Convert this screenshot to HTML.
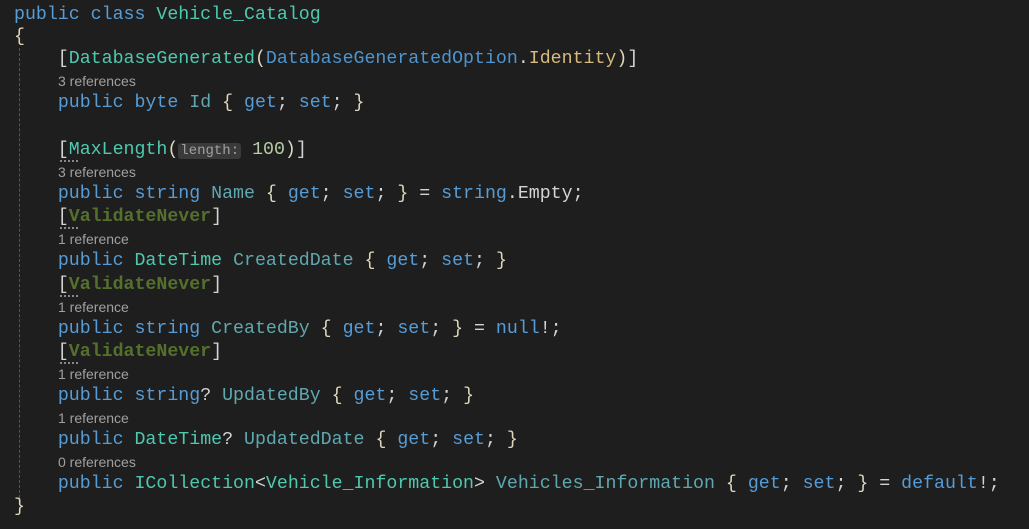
<!DOCTYPE html>
<html><head><meta charset="utf-8"><style>
html,body{margin:0;padding:0;background:#1e1e1e;width:1029px;height:529px;overflow:hidden;position:relative}
.l{position:absolute;left:14px;font-family:"Liberation Mono",monospace;font-size:18.25px;line-height:22px;color:#d4d4d4;white-space:pre}
.c{position:absolute;left:58px;font-family:"Liberation Sans",sans-serif;font-size:14px;line-height:16px;color:#a0a0a0;white-space:pre}
.k{color:#569cd6}.t{color:#4ec9b0}.p{color:#5fa8b0}.b{color:#ddd7bd}.n{color:#b5cea8}.o{color:#d7ba7d}.e{color:#4e94ce}
.v{color:#55702d;font-weight:bold}
.hint{background:#3a3a3a;color:#a0a0a0;font-size:14px;border-radius:3px;padding:0 2px}
.guide{position:absolute;left:19px;top:48px;height:450px;border-left:1px dashed #555}
.dots{position:absolute;left:60px;width:18px;border-top:2px dotted #888}
</style></head><body>
<div class="guide"></div>
<div class="l" style="top:4px"><span class="k">public class</span> <span class="t">Vehicle_Catalog</span></div>
<div class="l b" style="top:26px">{</div>
<div class="l" style="top:48px">    [<span class="t">DatabaseGenerated</span><span class="b">(</span><span class="e">DatabaseGeneratedOption</span>.<span class="o">Identity</span><span class="b">)</span>]</div>
<div class="c" style="top:73px">3 references</div>
<div class="l" style="top:92px">    <span class="k">public byte</span> <span class="p">Id</span> <span class="b">{</span> <span class="k">get</span>; <span class="k">set</span>; <span class="b">}</span></div>
<div class="l" style="top:139px">    [<span class="t">MaxLength</span><span class="b">(</span><span class="hint">length:</span> <span class="n">100</span><span class="b">)</span>]</div>
<div class="dots" style="top:160px"></div>
<div class="c" style="top:164px">3 references</div>
<div class="l" style="top:183px">    <span class="k">public string</span> <span class="p">Name</span> <span class="b">{</span> <span class="k">get</span>; <span class="k">set</span>; <span class="b">}</span> = <span class="k">string</span>.Empty;</div>
<div class="l" style="top:206px">    [<span class="v">ValidateNever</span>]</div>
<div class="dots" style="top:227px"></div>
<div class="c" style="top:231px">1 reference</div>
<div class="l" style="top:250px">    <span class="k">public</span> <span class="t">DateTime</span> <span class="p">CreatedDate</span> <span class="b">{</span> <span class="k">get</span>; <span class="k">set</span>; <span class="b">}</span></div>
<div class="l" style="top:274px">    [<span class="v">ValidateNever</span>]</div>
<div class="dots" style="top:295px"></div>
<div class="c" style="top:299px">1 reference</div>
<div class="l" style="top:318px">    <span class="k">public string</span> <span class="p">CreatedBy</span> <span class="b">{</span> <span class="k">get</span>; <span class="k">set</span>; <span class="b">}</span> = <span class="k">null</span>!;</div>
<div class="l" style="top:341px">    [<span class="v">ValidateNever</span>]</div>
<div class="dots" style="top:362px"></div>
<div class="c" style="top:366px">1 reference</div>
<div class="l" style="top:385px">    <span class="k">public string</span>? <span class="p">UpdatedBy</span> <span class="b">{</span> <span class="k">get</span>; <span class="k">set</span>; <span class="b">}</span></div>
<div class="c" style="top:410px">1 reference</div>
<div class="l" style="top:429px">    <span class="k">public</span> <span class="t">DateTime</span>? <span class="p">UpdatedDate</span> <span class="b">{</span> <span class="k">get</span>; <span class="k">set</span>; <span class="b">}</span></div>
<div class="c" style="top:454px">0 references</div>
<div class="l" style="top:473px">    <span class="k">public</span> <span class="t">ICollection</span>&lt;<span class="t">Vehicle_Information</span>&gt; <span class="p">Vehicles_Information</span> <span class="b">{</span> <span class="k">get</span>; <span class="k">set</span>; <span class="b">}</span> = <span class="k">default</span>!;</div>
<div class="l b" style="top:496px">}</div>
</body></html>
